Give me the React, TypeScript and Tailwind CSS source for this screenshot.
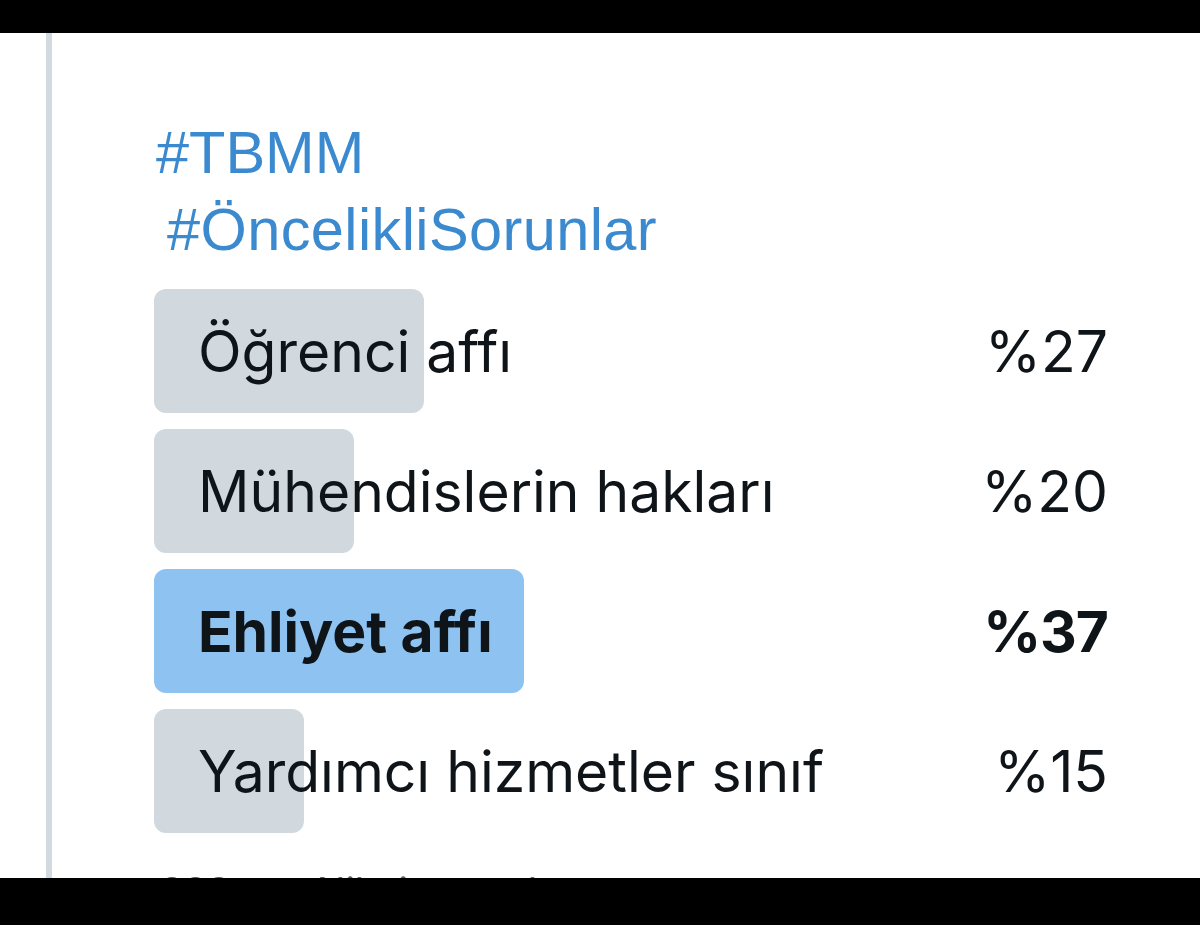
import React from 'react';

const OPTIONS = [
  { label: 'Öğrenci affı', pct: 27, top: false },
  { label: 'Mühendislerin hakları', pct: 20, top: false },
  { label: 'Ehliyet affı', pct: 37, top: true },
  { label: 'Yardımcı hizmetler sınıf', pct: 15, top: false },
];

const PollRow = ({ label, pct, top }: { label: string; pct: number; top: boolean }) => (
  <div className="relative h-[124px] w-[1000px] flex items-center justify-between pl-[44px] pr-[46px]">
    {/* fill bar, width from the vote share */}
    <div
      className={`absolute left-0 top-0 h-full rounded-[12px] ${top ? 'bg-[#8ec3f1]' : 'bg-[#d1d8de]'}`}
      style={{ width: `${pct * 10}px` }}
    />
    <span className={`relative leading-none text-[57px] text-[#0f1419] ${top ? 'font-bold' : 'font-normal'}`}>
      {label}
    </span>
    <span className={`relative leading-none text-[57px] text-[#0f1419] ${top ? 'font-bold tracking-[-1px]' : 'font-normal'}`}>
      %{pct}
    </span>
  </div>
);

export default function App() {
  return (
    <div className="w-[1200px] h-[925px] bg-white flex flex-col overflow-hidden font-['Inter','Liberation_Sans',sans-serif]">
      <div className="h-[33px] bg-black shrink-0" />

      <div className="flex-1 flex overflow-hidden">
        <div className="w-[46px] shrink-0" />
        <div className="w-[6px] shrink-0 bg-[#d3dadf]" />

        <div className="flex flex-col pl-[102px] pt-[81px]">
          <div className="text-[#3b8ad0] text-[59.5px] leading-[77px] font-['Liberation_Sans','Arial',sans-serif]">
            <div className="ml-[2px]">#TBMM</div>
            <div className="ml-[13px] tracking-[0.4px]">#ÖncelikliSorunlar</div>
          </div>

          <div className="mt-[21px] flex flex-col gap-[16px]">
            {OPTIONS.map((o) => (
              <PollRow key={o.label} {...o} />
            ))}
          </div>

          <div className="mt-[39px] ml-[6px] text-[38px] leading-none text-[#536471]">
            338 oy · Nihai sonuçlar
          </div>
        </div>
      </div>

      <div className="h-[47px] bg-black shrink-0" />
    </div>
  );
}
